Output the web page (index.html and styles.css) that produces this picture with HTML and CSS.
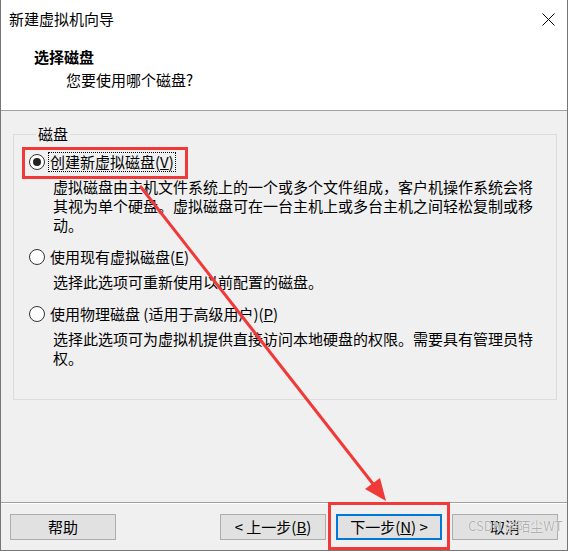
FILE: index.html
```html
<!DOCTYPE html>
<html lang="zh-CN">
<head>
    <meta charset="UTF-8">
    <meta name="viewport" content="width=device-width, initial-scale=1.0">
    <title>新建虚拟机向导</title>
    <link rel="stylesheet" href="styles.css">
</head>
<body>
    <div class="window">
        <div class="titlebar">
            <span class="title">新建虚拟机向导</span>
            <svg class="close" width="13" height="13" viewBox="0 0 13 13">
                <path d="M0.5 0.5 L12.5 12.5 M12.5 0.5 L0.5 12.5" stroke="#000" stroke-width="1" fill="none"/>
            </svg>
        </div>

        <div class="header">
            <div class="header-title">选择磁盘</div>
            <div class="header-sub">您要使用哪个磁盘?</div>
        </div>

        <div class="content">
            <fieldset class="group">
                <legend>磁盘</legend>

                <div class="option first">
                    <div class="choice">
                        <span class="radio checked"></span>
                        <span class="choice-label focused">创建新虚拟磁盘(<u>V</u>)</span>
                    </div>
                    <p class="desc">虚拟磁盘由主机文件系统上的一个或多个文件组成，客户机操作系统会将其视为单个硬盘。虚拟磁盘可在一台主机上或多台主机之间轻松复制或移动。</p>
                </div>

                <div class="option">
                    <div class="choice">
                        <span class="radio"></span>
                        <span class="choice-label">使用现有虚拟磁盘(<u>E</u>)</span>
                    </div>
                    <p class="desc">选择此选项可重新使用以前配置的磁盘。</p>
                </div>

                <div class="option">
                    <div class="choice">
                        <span class="radio"></span>
                        <span class="choice-label">使用物理磁盘 (适用于高级用户)(<u>P</u>)</span>
                    </div>
                    <p class="desc">选择此选项可为虚拟机提供直接访问本地硬盘的权限。需要具有管理员特权。</p>
                </div>
            </fieldset>
        </div>

        <div class="footer">
            <button class="btn">帮助</button>
            <div class="nav">
                <button class="btn">&lt; 上一步(<u>B</u>)</button>
                <button class="btn primary">下一步(<u>N</u>) &gt;</button>
                <button class="btn">取消</button>
            </div>
        </div>

        <!-- annotations drawn over the dialog -->
        <div class="mark mark-create"></div>
        <div class="mark mark-next"></div>
        <svg class="arrow" width="570" height="551" viewBox="0 0 570 551">
            <line x1="140" y1="186" x2="377" y2="489" stroke="#f03a3a" stroke-width="3"/>
            <polygon points="386,501 365,489 380,478" fill="#f03a3a"/>
        </svg>
        <span class="watermark">CSDN @陌尘WT</span>
    </div>
</body>
</html>
```

FILE: styles.css
```css
body {
    margin: 0;
    background-color: #ffffff;
    font-family: "Noto Sans CJK SC", "Noto Sans", sans-serif;
    font-size: 15px;
    color: #000;
}

.window {
    position: relative;
    width: 566px;
    height: 550px;
    border-left: 1px solid #767676;
    border-right: 1px solid #767676;
    border-bottom: 1px solid #767676;
    background-color: #f0f0f0;
}

.titlebar {
    height: 38px;
    display: flex;
    align-items: center;
    justify-content: space-between;
    padding: 0 12px 0 8px;
    background-color: #ffffff;
}

.title {
    line-height: 20px;
}

.header {
    height: 73px;
    box-sizing: border-box;
    background-color: #ffffff;
    border-bottom: 1px solid #a0a0a0;
}

.header-title {
    padding: 9px 0 0 33px;
    font-weight: bold;
    line-height: 20px;
}

.header-sub {
    margin-top: 3px;
    padding-left: 65px;
    line-height: 20px;
}

.content {
    height: 392px;
    padding-top: 13px;
    box-sizing: border-box;
    border-bottom: 1px solid #a0a0a0;
}

.group {
    margin: 0 10px 0 12px;
    padding: 0 0 0 15px;
    border: 1px solid #dcdcdc;
    height: 276px;
    box-sizing: border-box;
}

.group legend {
    margin-left: 7px;
    padding: 0 2px;
    line-height: 20px;
}

.option {
    margin-top: 13px;
}

.option.first {
    margin-top: 8px;
}

.choice {
    display: flex;
    align-items: center;
    gap: 3px;
    height: 20px;
}

.radio {
    width: 14px;
    height: 14px;
    border: 1px solid #333;
    border-radius: 50%;
    background-color: #fff;
    display: flex;
    align-items: center;
    justify-content: center;
}

.radio.checked::after {
    content: "";
    width: 8px;
    height: 8px;
    border-radius: 50%;
    background-color: #222;
}

.choice-label {
    line-height: 18px;
    padding: 0 1px;
    border: 1px dotted transparent;
}

.choice-label.focused {
    border-color: #000;
}

.desc {
    margin: 5px 0 0 24px;
    width: 486px;
    line-height: 19px;
}

.footer {
    height: 47px;
    display: flex;
    justify-content: space-between;
    align-items: flex-start;
    padding: 11px 9px 0 9px;
    box-sizing: border-box;
    box-shadow: inset 0 1px 0 #ffffff;
}

.nav {
    display: flex;
    gap: 10px;
}

.btn {
    width: 106px;
    height: 26px;
    padding: 0;
    font-family: inherit;
    font-size: 15px;
    color: #000;
    background-color: #e1e1e1;
    border: 1px solid #adadad;
    line-height: 20px;
}

.btn.primary {
    border: 2px solid #0078d7;
}

.mark {
    position: absolute;
    border: 3px solid #f03a3a;
    box-sizing: border-box;
}

.mark-create {
    left: 21px;
    top: 147px;
    width: 166px;
    height: 32px;
}

.mark-next {
    left: 327px;
    top: 502px;
    width: 122px;
    height: 48px;
}

.arrow {
    position: absolute;
    left: -1px;
    top: 0;
    pointer-events: none;
}

.watermark {
    position: absolute;
    left: 467px;
    top: 517px;
    font-size: 13px;
    line-height: 18px;
    color: rgba(150, 150, 150, 0.75);
    text-shadow: 0 0 1px #fff, 0 0 1px #fff;
}
```
